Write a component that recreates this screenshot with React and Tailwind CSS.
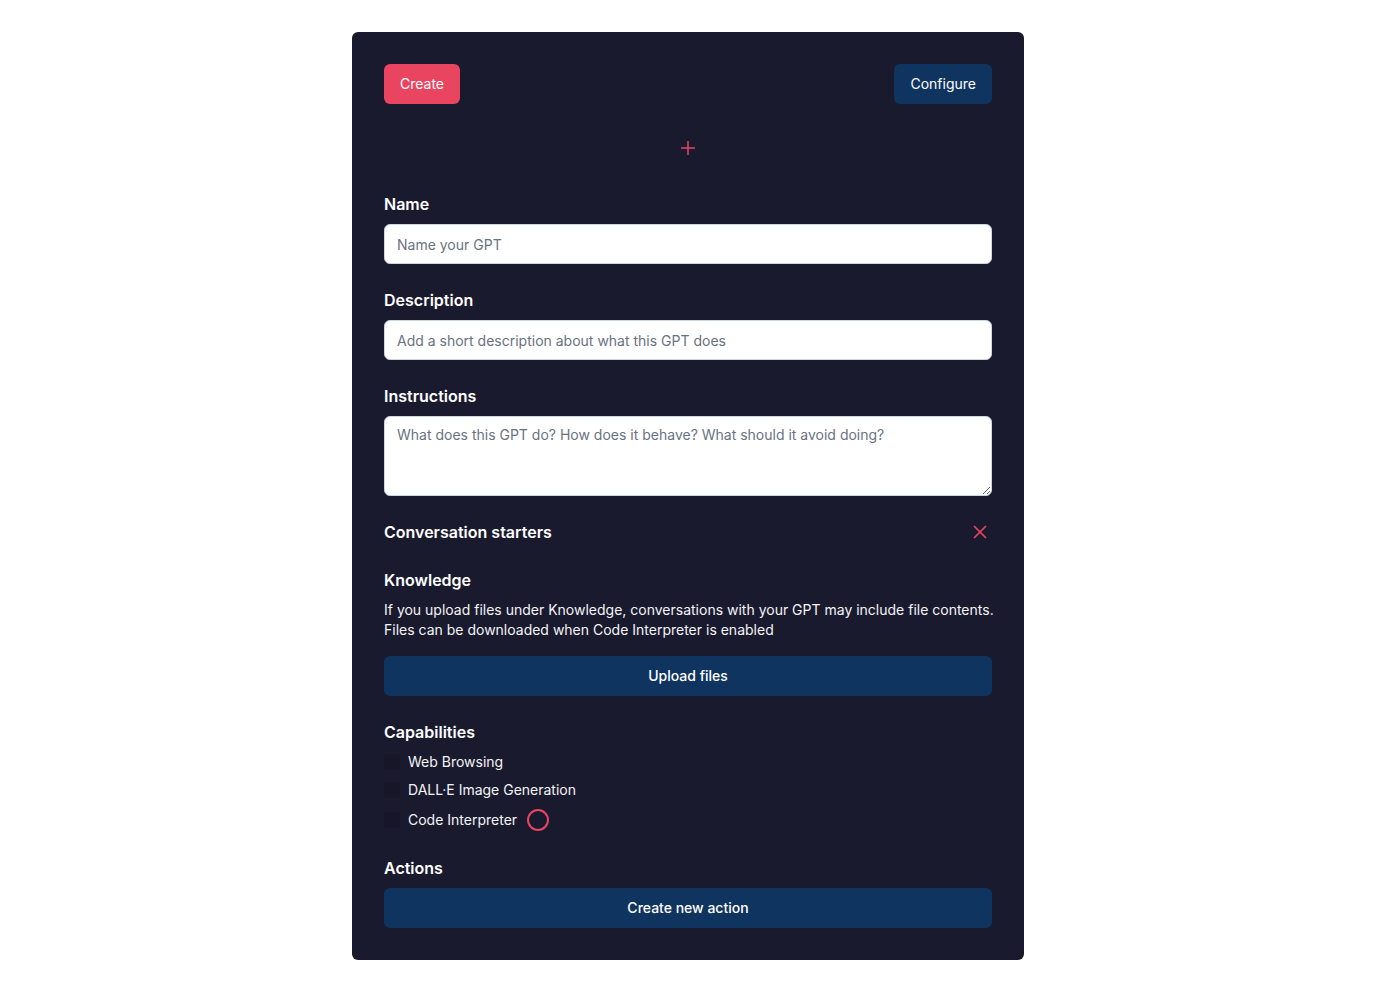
import { useState } from 'react';

export default function App() {
  const [caps, setCaps] = useState({ web: false, dalle: false, code: false });

  const capabilities = [
    { key: 'web', label: 'Web Browsing' },
    { key: 'dalle', label: 'DALL·E Image Generation' },
    { key: 'code', label: 'Code Interpreter' },
  ];

  return (
    <div className="min-h-screen bg-white flex justify-center py-8" style={{ fontFamily: 'Inter, "Noto Sans", sans-serif' }}>
      <div className="w-[672px] bg-[#1a1a2e] rounded-md p-8 text-white">
        <div className="flex justify-between items-center">
          <button className="h-10 px-4 bg-[#e94560] text-white text-sm rounded-md">Create</button>
          <button className="h-10 px-4 bg-[#0f3460] text-white text-sm rounded-md">Configure</button>
        </div>

        <div className="flex justify-center mt-9 mb-9">
          <svg width="16" height="16" viewBox="0 0 16 16" fill="none" stroke="#e94560" strokeWidth="1.5">
            <path d="M8 1v14M1 8h14" />
          </svg>
        </div>

        <div className="mb-6">
          <label className="block font-semibold mb-2">Name</label>
          <input
            type="text"
            placeholder="Name your GPT"
            className="block w-full h-10 px-3 text-sm bg-white text-gray-900 placeholder-gray-500 border border-gray-300 rounded-md"
          />
        </div>

        <div className="mb-6">
          <label className="block font-semibold mb-2">Description</label>
          <input
            type="text"
            placeholder="Add a short description about what this GPT does"
            className="block w-full h-10 px-3 text-sm bg-white text-gray-900 placeholder-gray-500 border border-gray-300 rounded-md"
          />
        </div>

        <div className="mb-6">
          <label className="block font-semibold mb-2">Instructions</label>
          <textarea
            placeholder="What does this GPT do? How does it behave? What should it avoid doing?"
            className="block w-full h-20 px-3 py-2 text-sm bg-white text-gray-900 placeholder-gray-500 border border-gray-300 rounded-md"
          />
        </div>

        <div className="flex justify-between items-center mb-6">
          <span className="font-semibold">Conversation starters</span>
          <svg width="16" height="16" viewBox="0 0 16 16" fill="none" stroke="#e94560" strokeWidth="1.75" className="mr-1">
            <path d="M2 2l12 12M14 2L2 14" />
          </svg>
        </div>

        <div className="mb-6">
          <label className="block font-semibold mb-2">Knowledge</label>
          <p className="text-sm text-gray-100 mb-4">
            <span className="block whitespace-nowrap">
              If you upload files under Knowledge, conversations with your GPT may include file contents.
            </span>
            <span className="block">Files can be downloaded when Code Interpreter is enabled</span>
          </p>
          <button className="w-full h-10 bg-[#0f3460] text-white text-sm font-medium rounded-md">Upload files</button>
        </div>

        <div className="mb-6">
          <label className="block font-semibold">Capabilities</label>
          <div className="mt-2 space-y-2">
            {capabilities.map((c) => (
              <label key={c.key} className="flex items-center text-sm text-gray-100">
                <input
                  type="checkbox"
                  checked={caps[c.key]}
                  onChange={() => setCaps((prev) => ({ ...prev, [c.key]: !prev[c.key] }))}
                  className="appearance-none w-4 h-4 bg-[#161628] rounded-sm mr-2"
                />
                {c.label}
                {c.key === 'code' && (
                  <span className="ml-2.5 flex items-center justify-center h-6">
                    <span className="w-[22px] h-[22px] rounded-full border-2 border-[#e94560]" />
                  </span>
                )}
              </label>
            ))}
          </div>
        </div>

        <div>
          <label className="block font-semibold mb-2">Actions</label>
          <button className="w-full h-10 bg-[#0f3460] text-white text-sm font-medium rounded-md">Create new action</button>
        </div>
      </div>
    </div>
  );
}
